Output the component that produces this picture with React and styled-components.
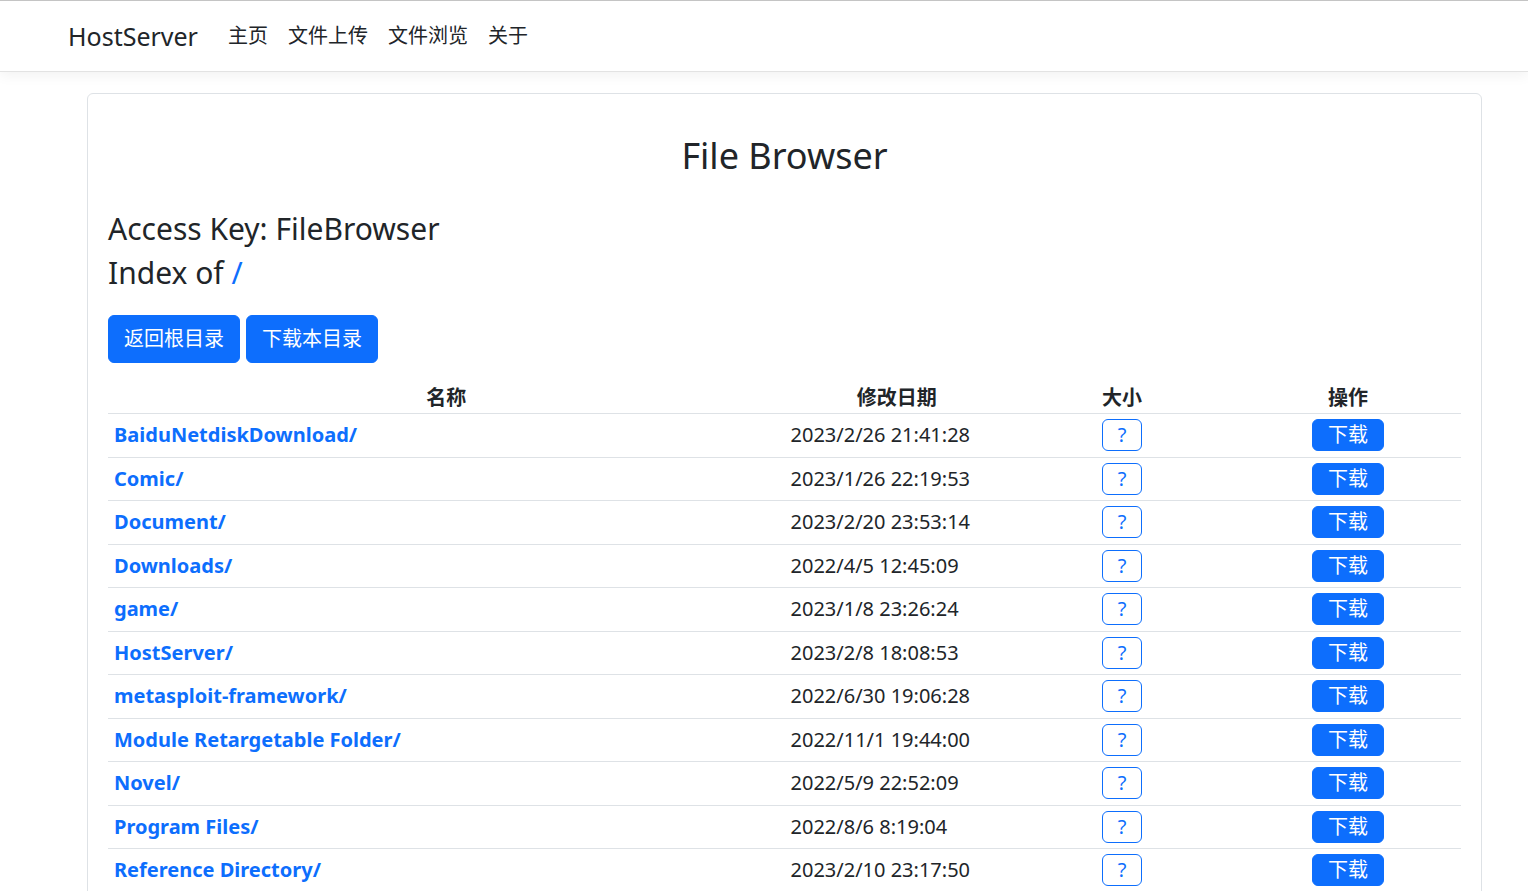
import styled, { createGlobalStyle } from "styled-components";

const GlobalStyle = createGlobalStyle`
    html, body {
        margin: 0;
        padding: 0;
        background: #fff;
    }
    body {
        font-family: "Noto Sans", "Noto Sans CJK SC", sans-serif;
        color: #212529;
        border-top: 1px solid #c4c4c4;
    }
`;

const Navbar = styled.nav`
    position: relative;
    height: 70px;
    background: #fff;
    border-bottom: 1px solid #e3e3e3;
    box-shadow: 0 4px 12px rgba(0, 0, 0, 0.05);
    display: flex;
    align-items: center;
    padding: 0 0 0 68px;
`;

const Brand = styled.a`
    font-size: 25px;
    line-height: 37px;
    color: #212529;
    text-decoration: none;
    margin-right: 20px;
`;

const NavList = styled.ul`
    display: flex;
    list-style: none;
    margin: 0;
    padding: 0;
`;

const NavLink = styled.li`
    font-size: 20px;
    line-height: 30px;
    padding: 10px;
    color: #212529;
`;

const Main = styled.main`
    padding: 21px 46px 0 87px;
`;

const Card = styled.div`
    border: 1px solid #dee2e6;
    border-radius: 6px;
    padding: 20px 20px 20px 20px;
`;

const Title = styled.h2`
    margin: 18px 0 31px;
    text-align: center;
    font-size: 36px;
    line-height: 48px;
    font-weight: 400;
`;

const Heading = styled.h4`
    margin: 0 0 8px;
    font-size: 30px;
    line-height: 36px;
    font-weight: 400;
`;

const Slash = styled.span`
    color: #0d6efd;
`;

const ButtonRow = styled.div`
    display: flex;
    gap: 6px;
    margin-top: 24px;
`;

const Button = styled.button`
    font-family: inherit;
    font-size: 20px;
    line-height: ${(p) => (p.$small ? "24px" : "30px")};
    padding: ${(p) => (p.$small ? "3px 15px" : "8px 15px")};
    border-radius: 6px;
    border: 1px solid #0d6efd;
    background: ${(p) => (p.$outline ? "#fff" : "#0d6efd")};
    color: ${(p) => (p.$outline ? "#0d6efd" : "#fff")};
    cursor: pointer;
`;

const Table = styled.table`
    width: 100%;
    margin-top: 10px;
    border-collapse: collapse;
    font-size: 20px;
    line-height: 30px;
`;

const HeadCell = styled.th`
    padding: 10px 6px 0;
    text-align: center;
    font-weight: 700;
    width: ${(p) => p.$w};
    border-bottom: 1px solid #dee2e6;
`;

const Row = styled.tr`
    height: 43.5px;
    border-bottom: 1px solid #dee2e6;
`;

const Cell = styled.td`
    padding: 0 6px;
    vertical-align: middle;
    text-align: ${(p) => (p.$left ? "left" : "center")};
`;

const FileLink = styled.a`
    color: #0d6efd;
    font-weight: 700;
    text-decoration: none;
`;

const files = [
    ["BaiduNetdiskDownload/", "2023/2/26 21:41:28"],
    ["Comic/", "2023/1/26 22:19:53"],
    ["Document/", "2023/2/20 23:53:14"],
    ["Downloads/", "2022/4/5 12:45:09"],
    ["game/", "2023/1/8 23:26:24"],
    ["HostServer/", "2023/2/8 18:08:53"],
    ["metasploit-framework/", "2022/6/30 19:06:28"],
    ["Module Retargetable Folder/", "2022/11/1 19:44:00"],
    ["Novel/", "2022/5/9 22:52:09"],
    ["Program Files/", "2022/8/6 8:19:04"],
    ["Reference Directory/", "2023/2/10 23:17:50"],
];

export default function App() {
    return (
        <>
            <GlobalStyle />
            <Navbar>
                <Brand href="#">HostServer</Brand>
                <NavList>
                    <NavLink>主页</NavLink>
                    <NavLink>文件上传</NavLink>
                    <NavLink>文件浏览</NavLink>
                    <NavLink>关于</NavLink>
                </NavList>
            </Navbar>

            <Main>
                <Card>
                    <Title>File Browser</Title>
                    <Heading>Access Key: FileBrowser</Heading>
                    <Heading>
                        Index of <Slash>/</Slash>
                    </Heading>
                    <ButtonRow>
                        <Button>返回根目录</Button>
                        <Button>下载本目录</Button>
                    </ButtonRow>

                    <Table>
                        <thead>
                            <tr>
                                <HeadCell $w="50%">名称</HeadCell>
                                <HeadCell $w="16.6%">修改日期</HeadCell>
                                <HeadCell $w="16.7%">大小</HeadCell>
                                <HeadCell $w="16.7%">操作</HeadCell>
                            </tr>
                        </thead>
                        <tbody>
                            {files.map(([name, date]) => (
                                <Row key={name}>
                                    <Cell $left>
                                        <FileLink href="#">{name}</FileLink>
                                    </Cell>
                                    <Cell $left>{date}</Cell>
                                    <Cell>
                                        <Button $small $outline>?</Button>
                                    </Cell>
                                    <Cell>
                                        <Button $small>下载</Button>
                                    </Cell>
                                </Row>
                            ))}
                        </tbody>
                    </Table>
                </Card>
            </Main>
        </>
    );
}
